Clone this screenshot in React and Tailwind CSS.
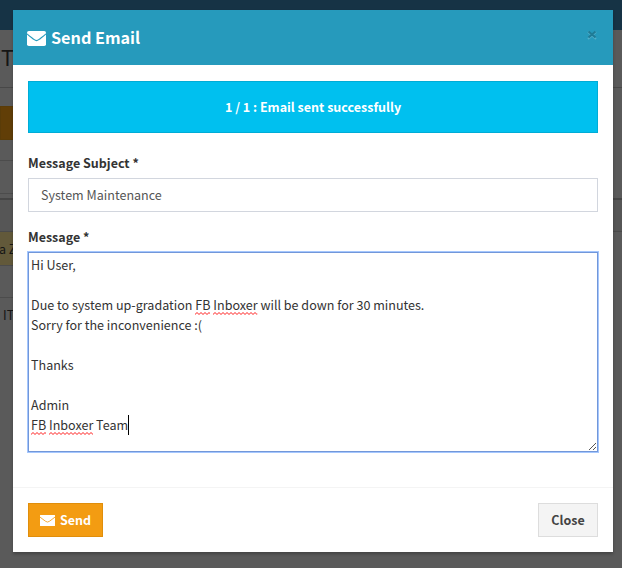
import React from "react";

function Envelope({ className, radius, lineClass }) {
  return (
    <svg viewBox="0 0 19 15" preserveAspectRatio="none" className={className}>
      <rect width="19" height="15" rx={radius} fill="currentColor" />
      <path
        d="M0 2.800C2.500 5.200 5 6.800 7.300 8.700Q9.500 10.600 11.700 8.700C14 6.800 16.500 5.200 19 2.800"
        className={lineClass}
        fill="none"
        strokeWidth="1.100"
      />
    </svg>
  );
}

function Misspelled({ children }) {
  return (
    <span className="relative inline-block">
      {children}
      <svg className="absolute bottom-0 left-0 h-[3px] w-full" fill="none">
        <defs>
          <pattern id="squiggle" width="4" height="3" patternUnits="userSpaceOnUse">
            <path d="M-1 1.500L0 2.500L2 .5L4 2.500L5 1.500" stroke="#f00" strokeWidth="0.900" />
          </pattern>
        </defs>
        <rect width="100%" height="3" fill="url(#squiggle)" />
      </svg>
    </span>
  );
}

function Backdrop() {
  return (
    <div className="absolute inset-0 overflow-hidden bg-[#5a5a5a] text-[#151515]">
      <div className="h-[30px] bg-[#163345]" />
      <div className="flex h-[58px] items-center border-b border-[#484848] pb-[3px] pl-[1px] text-[21.500px]">T</div>
      <div className="mt-[18px] h-[34px] w-[60px] border border-[#5a3c08] bg-[#613e07]" />
      <div className="mt-[20px] h-[33px] w-[60px] border-t border-[#4c4c4c]" />
      <div className="h-[5px] w-[60px] border-t border-[#4c4c4c]" />
      <div className="h-[34px] border-t-2 border-b border-t-[#454545] border-b-[#4a4a4a] bg-[#565656]" />
      <div className="flex h-[33px] w-[60px] items-center bg-[#62593a] text-[12.500px]">
        <span className="-ml-px">a Z</span>
      </div>
      <div className="h-[32px] w-[60px] border-t border-[#4c4c4c]" />
      <div className="flex h-[34px] w-[60px] items-center border-t border-[#4c4c4c] pl-[3px] text-[12.500px]">IT</div>
    </div>
  );
}

export default function App() {
  return (
    <div className="relative h-[568px] w-[622px] overflow-hidden font-['Noto_Sans_CJK_SC','Noto_Sans_CJK_JP',sans-serif] text-[12.500px] leading-[20px] text-[#333]">
      <Backdrop />
      <div className="absolute top-[10px] left-[13px] flex h-[542px] w-[600px] flex-col bg-white shadow-[0_2px_3px_rgba(0,0,0,0.25)]">
        <header className="flex h-[55px] items-center bg-[#269abc] pr-[15px] pl-[14px] text-white">
          <Envelope className="mt-[1px] h-[15px] w-[19px]" radius="1.8" lineClass="stroke-[#269abc]" />
          <h4 className="mb-[2px] ml-[5px] text-[16.200px] leading-[20px] font-bold">Send Email</h4>
          <button className="mr-[1px] mb-[5px] ml-auto text-[#1f7b96]">
            <svg viewBox="0 0 10 10" className="size-[10px]" fill="none" strokeWidth="2">
              <path d="M1 2l8 7M9 2l-8 7" stroke="#51aec9" />
              <path d="M1.500 1.500l7 6M8.500 1.500l-7 6" stroke="currentColor" />
            </svg>
          </button>
        </header>
        <main className="flex h-[422px] flex-col px-[15px] pt-[16px]">
          <div className="flex h-[52px] items-center justify-center border border-[#00acd6] bg-[#00c0ef] font-bold text-white">
            1 / 1 : Email sent successfully
          </div>
          <label className="mt-[20px] h-[25px] font-bold">Message Subject *</label>
          <div className="flex h-[34px] items-center border border-[#d2d6de] px-[12px] text-[12.550px] text-[#555]">
            System Maintenance
          </div>
          <label className="mt-[15px] h-[25px] font-bold">Message *</label>
          <div className="relative h-[200px] border border-[#7297d9] px-[2px] pt-[2px] text-[12.550px] whitespace-pre shadow-[0_0_0_1px_#a5c7fe]">
            <p>Hi User,</p>
            <p className="mt-[20px]">
              Due to system up-gradation <Misspelled>FB</Misspelled> <Misspelled>Inboxer</Misspelled> will be down for 30 minutes.
            </p>
            <p>Sorry for the inconvenience :(</p>
            <p className="mt-[20px]">Thanks</p>
            <p className="mt-[20px]">Admin</p>
            <p>
              <Misspelled>FB</Misspelled> <Misspelled>Inboxer</Misspelled> Team
              <span className="inline-block h-[20px] w-px bg-black align-top" />
            </p>
            <svg viewBox="0 0 7 7" className="absolute right-[1px] bottom-[1px] size-[7px]" stroke="#555" fill="none">
              <path d="M0 7L7 0M4 7l3-3" />
            </svg>
          </div>
        </main>
        <footer className="flex h-[65px] justify-between border-t border-[#f4f4f4] px-[15px] pt-[15px] font-bold">
          <button className="flex h-[34px] w-[75px] items-center border border-[#e08e0b] bg-[#f39c12] pl-[11px] text-white">
            <Envelope className="mr-[5px] h-[11px] w-[15px]" radius="0.5" lineClass="stroke-[#f39c12]" />
            Send
          </button>
          <button className="h-[34px] w-[60px] border border-[#ddd] bg-[#f4f4f4] text-[#444]">Close</button>
        </footer>
      </div>
    </div>
  );
}
